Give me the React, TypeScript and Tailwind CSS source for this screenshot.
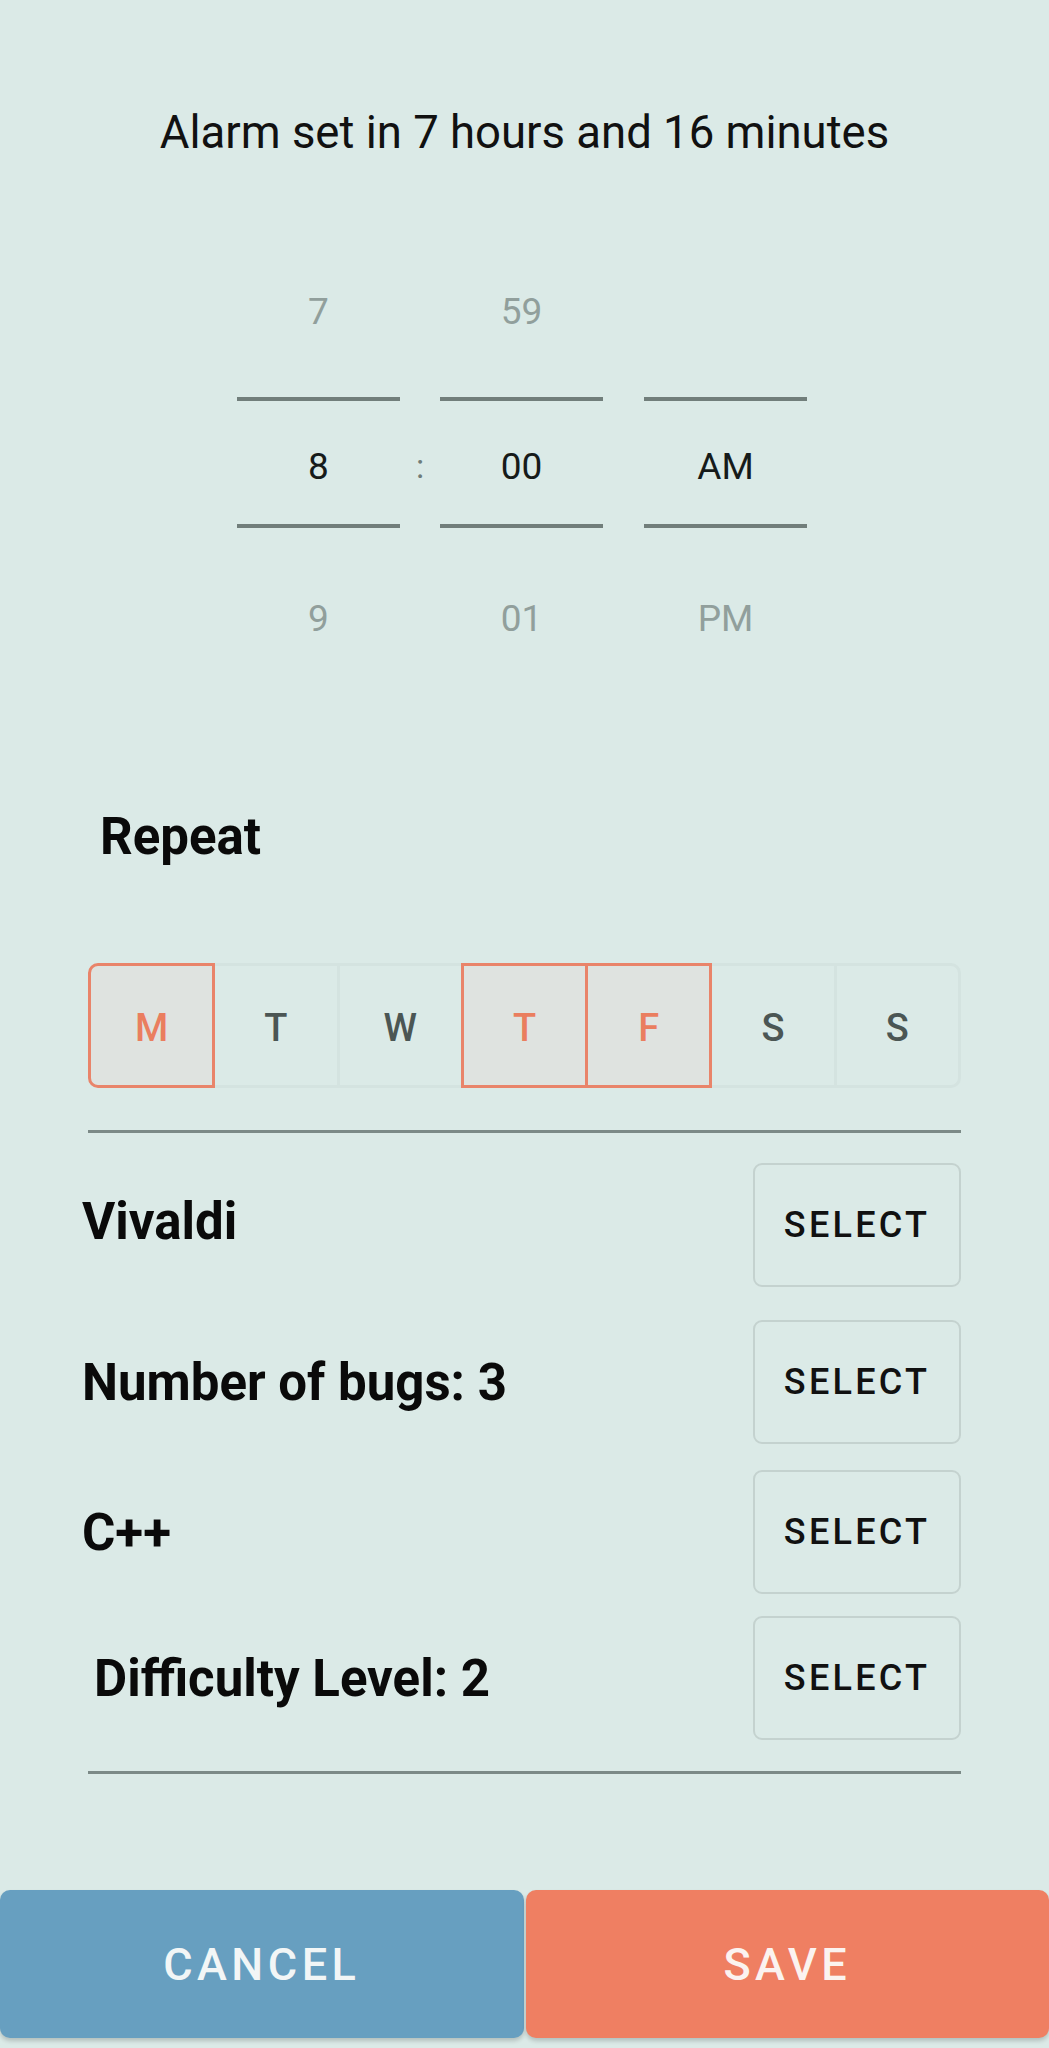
import React from "react";

const days = [
    { label: "M", on: true },
    { label: "T", on: false },
    { label: "W", on: false },
    { label: "T", on: true },
    { label: "F", on: true },
    { label: "S", on: false },
    { label: "S", on: false },
];

const challenges = [
    { label: "Vivaldi", indent: false, mt: "mt-[30px]", lift: true },
    { label: "Number of bugs: 3", indent: false, mt: "mt-[33px]", lift: false },
    { label: "C++", indent: false, mt: "mt-[26px]", lift: false },
    { label: "Difficulty Level: 2", indent: true, mt: "mt-[22px]", lift: false },
];

function PickerColumn({ top, mid, bottom }: { top: string; mid: string; bottom: string }) {
    return (
        <div className="w-[163px] flex flex-col text-[37px] leading-none">
            <div className="h-[172px] flex items-center justify-center text-[#919f9c]">{top}</div>
            <div className="h-[4px] bg-[#717e7b]" />
            <div className="h-[123px] pt-[8px] flex items-center justify-center text-[#161b1a]">{mid}</div>
            <div className="h-[4px] bg-[#717e7b]" />
            <div className="h-[178px] pt-[2px] flex items-center justify-center text-[#919f9c]">{bottom}</div>
        </div>
    );
}

export default function App() {
    return (
        <div
            className="w-full h-[2048px] bg-[#dbeae7] flex flex-col overflow-hidden"
            style={{ fontFamily: "Roboto, 'Noto Sans', Arial, sans-serif" }}
        >
            {/* header */}
            <div className="mt-[103px] h-[60px] flex items-center justify-center text-[45.5px] text-[#111] leading-none">
                Alarm set in 7 hours and 16 minutes
            </div>

            {/* time picker */}
            <div className="mt-[62px] pr-[5px] flex justify-center">
                <PickerColumn top="7" mid="8" bottom="9" />
                <div className="w-[40px] flex flex-col">
                    <div className="h-[176px]" />
                    <div className="h-[123px] pt-[6px] flex items-center justify-center text-[34px] text-[#6f7d7a] leading-none">:</div>
                </div>
                <PickerColumn top="59" mid="00" bottom="01" />
                <div className="w-[41px]" />
                <PickerColumn top="" mid="AM" bottom="PM" />
            </div>

            {/* repeat */}
            <div className="mt-[100px] h-[60px] pl-[100px] flex items-center text-[51px] font-bold text-[#0a0a0a] leading-none">
                Repeat
            </div>

            <div className="mt-[97px] mx-[88px] flex h-[125px]">
                {days.map((d, i) => (
                    <div
                        key={i}
                        className={[
                            "flex-1 flex items-center justify-center border-[3px] pt-[5px] text-[38px] font-medium leading-none",
                            i > 0 ? "-ml-[3px]" : "",
                            i === 0 ? "rounded-l-[10px]" : "",
                            i === days.length - 1 ? "rounded-r-[10px]" : "",
                            d.on
                                ? "relative z-10 border-[#e9846a] bg-[#dfe3e0] text-[#ea7e5f]"
                                : "border-[#d4e3e0] text-[#4b5654]",
                        ].join(" ")}
                    >
                        {d.label}
                    </div>
                ))}
            </div>

            <div className="mt-[42px] mx-[88px] h-[3px] bg-[#7c8a87]" />

            {/* challenge rows */}
            {challenges.map((c, i) => (
                <div key={i} className={`${c.mt} flex items-center justify-between pr-[88px] ${c.indent ? "pl-[94px]" : "pl-[82px]"}`}>
                    <span className={`text-[51px] font-bold text-[#0a0a0a] leading-none ${c.lift ? "-mt-[8px]" : ""}`}>
                        {c.label}
                    </span>
                    <button className="w-[208px] h-[124px] rounded-[9px] border-2 border-[#c4d2cf] flex items-center justify-center text-[36px] font-medium tracking-[0.09em] text-[#111] leading-none">
                        SELECT
                    </button>
                </div>
            ))}

            <div className="mt-[31px] mx-[88px] h-[3px] bg-[#7c8a87]" />

            {/* footer actions */}
            <div className="mt-[116px] flex gap-[2px]">
                <button className="flex-1 h-[148px] rounded-[10px] bg-[#679fc0] shadow-[0_3px_4px_rgba(0,0,0,0.18)] text-[45px] font-medium tracking-[0.1em] text-[#f2f6f6] leading-none">
                    CANCEL
                </button>
                <button className="flex-1 h-[148px] rounded-[10px] bg-[#ef7f62] shadow-[0_3px_4px_rgba(0,0,0,0.18)] text-[45px] font-medium tracking-[0.1em] text-[#fbf3f0] leading-none">
                    SAVE
                </button>
            </div>
        </div>
    );
}
